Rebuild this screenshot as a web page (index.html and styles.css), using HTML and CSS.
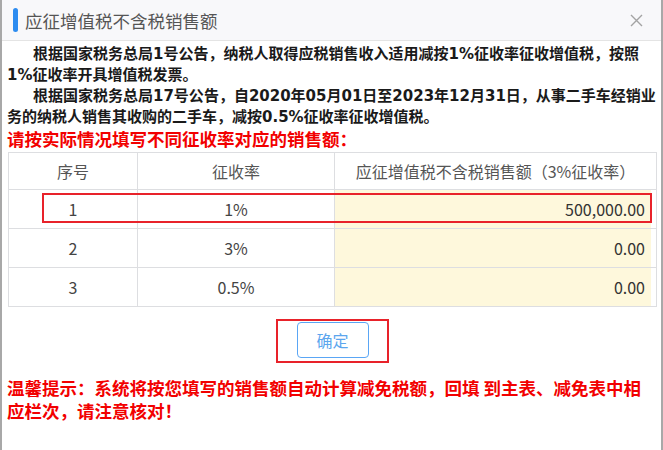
FILE: index.html
```html
<!DOCTYPE html>
<html lang="zh-CN">
<head>
    <meta charset="UTF-8">
    <meta name="viewport" content="width=device-width, initial-scale=1.0">
    <title>应征增值税不含税销售额</title>
    <link rel="stylesheet" href="styles.css">
</head>
<body>

    <div class="dialog">
        <!-- Header -->
        <div class="dialog-header">
            <span class="title-bar"></span>
            <span class="dialog-title">应征增值税不含税销售额</span>
            <svg class="close-icon" width="13" height="13" viewBox="0 0 13 13">
                <path d="M1 1 L12 12 M12 1 L1 12" stroke="#a3a3a3" stroke-width="1.4" fill="none"/>
            </svg>
        </div>

        <!-- Body -->
        <div class="dialog-body">
            <p class="notice">根据国家税务总局1号公告，纳税人取得应税销售收入适用减按1%征收率征收增值税，按照1%征收率开具增值税发票。</p>
            <p class="notice">根据国家税务总局17号公告，自2020年05月01日至2023年12月31日，从事二手车经销业务的纳税人销售其收购的二手车，减按0.5%征收率征收增值税。</p>
            <p class="red-title">请按实际情况填写不同征收率对应的销售额：</p>

            <div class="table-wrap">
                <table class="rate-table">
                    <thead>
                        <tr>
                            <th class="col-no">序号</th>
                            <th class="col-rate">征收率</th>
                            <th class="col-amount">应征增值税不含税销售额（3%征收率）</th>
                        </tr>
                    </thead>
                    <tbody>
                        <tr>
                            <td>1</td>
                            <td>1%</td>
                            <td class="amount">500,000.00</td>
                        </tr>
                        <tr>
                            <td>2</td>
                            <td>3%</td>
                            <td class="amount">0.00</td>
                        </tr>
                        <tr>
                            <td>3</td>
                            <td>0.5%</td>
                            <td class="amount">0.00</td>
                        </tr>
                    </tbody>
                </table>
                <!-- highlight box over first row -->
                <div class="row-mark"></div>
            </div>

            <div class="btn-row">
                <div class="btn-mark">
                    <button class="btn-ok">确定</button>
                </div>
            </div>

            <p class="warn">温馨提示：系统将按您填写的销售额自动计算减免税额，回填 到主表、减免表中相应栏次，请注意核对！</p>
        </div>
    </div>

</body>
</html>
```

FILE: styles.css
```css
body {
    margin: 0;
    padding: 0;
    background: #fff;
    font-family: "Noto Sans CJK SC", "Noto Sans", sans-serif;
    color: #333;
}

/* Dialog */
.dialog {
    width: 659px;
    height: 450px;
    border-left: 2px solid #a8a8a8;
    border-right: 2px solid #a8a8a8;
    background: #fff;
}

/* Header */
.dialog-header {
    height: 40px;
    display: flex;
    align-items: center;
    padding-left: 11px;
    padding-right: 18px;
    background: #f8f8fa;
    border-bottom: 1px solid #e4e4e4;
}

.title-bar {
    width: 5px;
    height: 24px;
    border-radius: 3px;
    background: #2d8cf0;
    margin-right: 7px;
}

.dialog-title {
    font-size: 17.5px;
    color: #555;
    flex: 1;
}

.close-icon {
    display: block;
}

/* Body */
.dialog-body {
    padding: 3px 0 0 5px;
}

.notice {
    margin: 0;
    font-family: "DejaVu Sans", "Noto Sans CJK SC", sans-serif;
    font-size: 15px;
    font-weight: bold;
    line-height: 21px;
    color: #1a1a1a;
    text-indent: 26px;
}

.red-title {
    margin: 0;
    font-size: 17.5px;
    font-weight: bold;
    line-height: 21px;
    color: #f20000;
}

/* Table */
.table-wrap {
    position: relative;
    margin: 3px 0 0 1px;
    width: 649px;
}

.rate-table {
    width: 649px;
    border-collapse: collapse;
    border: 1px solid #dddee1;
    table-layout: fixed;
}

.rate-table th,
.rate-table td {
    border: 1px solid #dddee1;
    text-align: center;
    font-size: 16px;
    font-weight: normal;
    color: #444;
    padding: 0;
}

.rate-table th {
    height: 36px;
    color: #555;
}

.rate-table td {
    height: 38px;
}

.col-no {
    width: 128px;
}

.col-rate {
    width: 196px;
}

.rate-table td.amount {
    text-align: right;
    padding-right: 11px;
    background: #fef8dc;
    box-shadow: inset -5px 0 0 #fff;
    color: #333;
}

.row-mark {
    position: absolute;
    left: 34px;
    top: 41px;
    width: 606px;
    height: 26px;
    border: 2px solid #e8222a;
}

/* Button */
.btn-row {
    display: flex;
    justify-content: center;
    margin-top: 12px;
    padding-right: 4px;
}

.btn-mark {
    border: 2px solid #e8222a;
    padding: 1px 18px 3px 19px;
}

.btn-ok {
    width: 72px;
    height: 36px;
    border: 1px solid #5aa6f5;
    border-radius: 4px;
    background: #fff;
    color: #5ca6ee;
    font-family: "Noto Sans CJK SC", sans-serif;
    font-size: 16px;
    cursor: pointer;
}

/* Warning */
.warn {
    margin: 13px 0 0;
    padding-right: 4px;
    font-size: 17.5px;
    font-weight: bold;
    line-height: 23px;
    color: #f20000;
}
```
